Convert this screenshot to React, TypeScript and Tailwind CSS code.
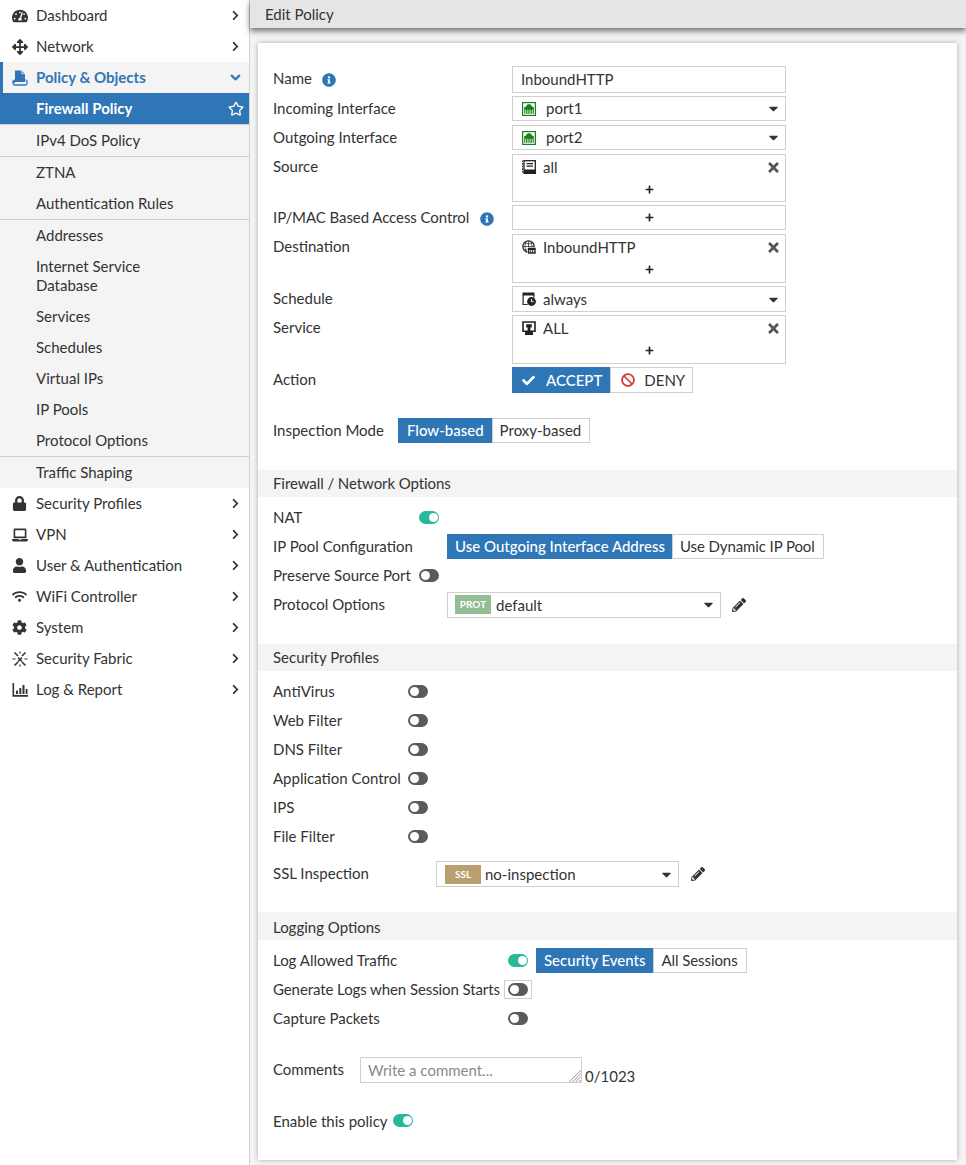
import { ChevronDown, Star } from 'lucide-react';
import { ReactNode } from 'react';
import {
  FaTachometerAlt,
  FaArrowsAlt,
  FaChevronRight,
  FaLock,
  FaLaptop,
  FaUser,
  FaWifi,
  FaCog,
  FaInfoCircle,
  FaTimes,
  FaPlus,
  FaCaretDown,
  FaCheck,
  FaBan,
  FaPencilAlt,
} from 'react-icons/fa';

// Custom FortiOS glyphs, not in the icon packs
function PolicyIcon() {
  return (
    <svg viewBox="0 0 16 16" className="w-4 h-4" fill="currentColor">
      <path d="M3 0.5h6.5L13 4v8H3z" />
      <path d="M9.8 0.5v3.2H13" fill="none" stroke="#f4f4f4" strokeWidth="0.8" />
      <path d="M1 10.5v3a1.5 1.5 0 0 0 1.5 1.5h11a1.5 1.5 0 0 0 1.5-1.5v-2a1.5 1.5 0 0 0-1.5-1.5" fill="none" stroke="currentColor" strokeWidth="1.3" />
      <path d="M1 13.5V10.8L3 9v4z" />
    </svg>
  );
}

function FabricIcon() {
  return (
    <svg viewBox="0 0 16 16" className="w-4 h-4" fill="none" stroke="currentColor" strokeWidth="1.6">
      <path d="M2.5 1.5l3.5 3.5M13.5 1.5L10 5M2.5 14.5L6 11M13.5 14.5L10 11M6 6.5l4 4M10 6.5l-4 4" />
      <path d="M0.5 8h3M12.5 8h3M8 0.5v2M8 13.5v2" strokeWidth="1.2" />
    </svg>
  );
}

function LogIcon() {
  return (
    <svg viewBox="0 0 16 16" className="w-4 h-4" fill="currentColor">
      <path d="M0.5 1h1.6v12H16v1.8H0.5z" />
      <path d="M4 8.5h2v3.5H4zM7.3 6h2v6h-2zM10.5 3h2v9h-2zM13.7 7h1.8v5h-1.8z" />
    </svg>
  );
}

function PortIcon() {
  return (
    <svg viewBox="0 0 14 14" className="w-[14px] h-[14px]">
      <rect x="0.6" y="0.6" width="12.8" height="12.8" fill="#fff" stroke="#1a7f1a" strokeWidth="1.2" />
      <path d="M2.2 11.8V5h1.6V3.4h1.5V2.2h3.4v1.2h1.5V5h1.6v6.8z" fill="#1a7f1a" />
      <path d="M3.5 7.8v4M5.3 7.8v4M7 7.8v4M8.7 7.8v4M10.5 7.8v4" stroke="#fff" strokeWidth="0.7" />
    </svg>
  );
}

function AddressIcon() {
  return (
    <svg viewBox="0 0 14 14" className="w-[14px] h-[14px]">
      <rect x="2" y="0.7" width="11.3" height="12.6" fill="#fff" stroke="#222" strokeWidth="1.3" />
      <path d="M2 9.5h12v4.5H2z" fill="#222" />
      <path d="M0.6 0.5v13" stroke="#222" strokeWidth="1.1" strokeDasharray="1.6 1" />
      <path d="M4.5 3h6.5v1.2H4.5zM4.5 5.6h6.5v1.2H4.5z" fill="#222" />
    </svg>
  );
}

function VipIcon() {
  return (
    <svg viewBox="0 0 14 14" className="w-[14px] h-[14px]">
      <circle cx="6.5" cy="6.5" r="5.7" fill="none" stroke="#222" strokeWidth="1.2" />
      <path d="M1 6.5h11M6.5 1v11M3 2.8c2.2 1.3 4.8 1.3 7 0M3 10.2c2.2-1.3 4.8-1.3 7 0M4.5 1.5c-2 3-2 7 0 10M8.5 1.5c2 3 2 7 0 10" fill="none" stroke="#222" strokeWidth="0.7" />
      <rect x="5.6" y="7.4" width="8.4" height="6.6" fill="#222" stroke="#fff" strokeWidth="0.6" />
      <path d="M7.2 10h1.1v2.2H7.2zM9.2 10h1.1v2.2H9.2zM11.2 10h1.1v2.2h-1.1z" fill="#fff" />
    </svg>
  );
}

function ScheduleIcon() {
  return (
    <svg viewBox="0 0 14 14" className="w-[14px] h-[14px]">
      <path d="M0.5 0.5h12v3h-12z" fill="#222" />
      <path d="M1.1 3v9.5h4.5M11.9 3v2.6" fill="none" stroke="#222" strokeWidth="1.2" />
      <circle cx="9.5" cy="9.5" r="4.4" fill="#222" />
      <path d="M9.5 7v2.7h2.1" fill="none" stroke="#fff" strokeWidth="1" />
    </svg>
  );
}

function ServiceIcon() {
  return (
    <svg viewBox="0 0 14 14" className="w-[14px] h-[14px]">
      <path d="M1 1h12v9.2H1z" fill="none" stroke="#222" strokeWidth="1.6" />
      <path d="M4.2 3.2h5.6v3.4H8.4v3.6H5.6V6.6H4.2z" fill="#222" />
      <path d="M3 11h8v3H3z" fill="#222" />
    </svg>
  );
}

type NavItem = { label: string; icon: ReactNode };

const topNav: NavItem[] = [
  { label: 'Dashboard', icon: <FaTachometerAlt className="w-4 h-4" /> },
  { label: 'Network', icon: <FaArrowsAlt className="w-4 h-4" /> },
];

const bottomNav: NavItem[] = [
  { label: 'Security Profiles', icon: <FaLock className="w-[15px] h-[15px]" /> },
  { label: 'VPN', icon: <FaLaptop className="w-4 h-4" /> },
  { label: 'User & Authentication', icon: <FaUser className="w-[15px] h-[15px]" /> },
  { label: 'WiFi Controller', icon: <FaWifi className="w-[15px] h-[15px]" /> },
  { label: 'System', icon: <FaCog className="w-[15px] h-[15px]" /> },
  { label: 'Security Fabric', icon: <FabricIcon /> },
  { label: 'Log & Report', icon: <LogIcon /> },
];

function NavRow({ item }: { item: NavItem }) {
  return (
    <div className="flex items-center h-[31px] pl-3 pr-2 text-[#333]">
      <span className="w-6 flex items-center">{item.icon}</span>
      <span className="flex-1">{item.label}</span>
      <FaChevronRight className="w-[11px] h-[11px]" />
    </div>
  );
}

function SubRow({ label, border }: { label: string; border?: boolean }) {
  return (
    <div className={`flex items-center h-[31px] pl-9 text-[#333] box-content ${border ? 'border-b border-[#cfcfcf]' : ''}`}>
      {label}
    </div>
  );
}

function Sidebar() {
  return (
    <aside className="w-[250px] shrink-0 bg-white border-r border-[#cfcfcf]">
      {topNav.map((item) => (
        <NavRow key={item.label} item={item} />
      ))}
      <div className="flex items-center h-[31px] pl-[9px] pr-[6px] bg-[#f4f4f4] border-l-[3px] border-[#2f76b7] text-[#2f76b7] font-bold">
        <span className="w-6 flex items-center">
          <PolicyIcon />
        </span>
        <span className="flex-1">Policy &amp; Objects</span>
        <ChevronDown className="w-[15px] h-[15px]" strokeWidth={3.5} />
      </div>
      <div className="flex items-center h-[31px] pl-9 pr-[5px] bg-[#2f76b7] text-white font-bold box-content border-b border-[#cfcfcf]">
        <span className="flex-1">Firewall Policy</span>
        <Star className="w-4 h-4" strokeWidth={2} />
      </div>
      <div className="bg-[#f4f4f4]">
        <SubRow label="IPv4 DoS Policy" border />
        <SubRow label="ZTNA" />
        <SubRow label="Authentication Rules" border />
        <SubRow label="Addresses" />
        <div className="h-[50px] pl-9 flex items-center text-[#333] leading-[19px]">
          <span>
            Internet Service
            <br />
            Database
          </span>
        </div>
        <SubRow label="Services" />
        <SubRow label="Schedules" />
        <SubRow label="Virtual IPs" />
        <SubRow label="IP Pools" />
        <SubRow label="Protocol Options" border />
        <SubRow label="Traffic Shaping" />
      </div>
      {bottomNav.map((item) => (
        <NavRow key={item.label} item={item} />
      ))}
    </aside>
  );
}

function Label({ children, className = '' }: { children: ReactNode; className?: string }) {
  return <div className={`w-[239px] shrink-0 text-[#333] leading-[24px] ${className}`}>{children}</div>;
}

function Info() {
  return <FaInfoCircle className="inline-block w-[14px] h-[14px] text-[#2f76b7]" />;
}

function Caret() {
  return <FaCaretDown className="w-[9px] h-[15px] text-[#333]" />;
}

function SelectBox({ icon, text, h = 'h-[25px]', gap = 'ml-[10px]' }: { icon: ReactNode; text: string; h?: string; gap?: string }) {
  return (
    <div className={`w-[274px] ${h} border border-[#cfcfcf] flex items-center pl-[9px] pr-[7px] text-[#333]`}>
      {icon}
      <span className={`flex-1 ${gap}`}>{text}</span>
      <Caret />
    </div>
  );
}

function MultiBox({ icon, text, h = 'h-[49px]' }: { icon: ReactNode; text: string; h?: string }) {
  return (
    <div className={`relative w-[274px] ${h} border border-[#cfcfcf] text-[#333]`}>
      <div className="flex items-center h-[24px] pl-[9px]">
        {icon}
        <span className="ml-[7px]">{text}</span>
      </div>
      <FaTimes className="absolute right-[6px] top-[5px] w-[11px] h-[15px] text-[#555]" />
      <div className="flex justify-center pt-[6px]">
        <FaPlus className="w-[9px] h-[9px] text-[#222]" />
      </div>
    </div>
  );
}

function Toggle({ on }: { on?: boolean }) {
  return (
    <span
      className={`relative inline-block w-5 h-[13px] rounded-full shrink-0 ${on ? 'bg-[#26b99a]' : 'bg-[#5a5a5a]'}`}
    >
      <span
        className={`absolute top-[2px] w-[9px] h-[9px] rounded-full bg-white ${on ? 'right-[1.5px]' : 'left-[1.5px]'}`}
      />
    </span>
  );
}

function SectionHead({ title, className = '' }: { title: string; className?: string }) {
  return <div className={`h-[27px] flex items-center px-[15px] bg-[#f4f4f4] text-[#333] ${className}`}>{title}</div>;
}

function Segmented({ options }: { options: ReactNode[] }) {
  return (
    <div className="flex h-[25px]">
      {options.map((opt, i) => (
        <div
          key={i}
          className={
            i === 0
              ? 'flex items-center px-[8px] bg-[#2f76b7] text-white font-medium'
              : 'flex items-center pl-[7px] pr-[8px] border border-[#cfcfcf] text-[#333]'
          }
        >
          {opt}
        </div>
      ))}
    </div>
  );
}

function ProfileRow({ label }: { label: string }) {
  return (
    <div className="flex items-center h-[29px]">
      <div className="w-[135px] text-[#333]">{label}</div>
      <Toggle />
    </div>
  );
}

export default function App() {
  return (
    <div className="flex w-[966px] h-[1165px] overflow-hidden font-['Lato',sans-serif] text-[15px] bg-[#f4f4f4]">
      <Sidebar />
      <main className="flex-1 min-w-0">
        <div className="h-[28px] pl-[15px] flex items-center bg-[#e5e5e5] text-[#333] shadow-[0_3px_6px_rgba(0,0,0,0.55)]">
          Edit Policy
        </div>
        <div className="ml-2 mr-[9px] mt-[15px] h-[1117px] bg-white shadow-[0_0_5px_rgba(0,0,0,0.3)]">
          <div className="pl-[15px] pt-[23px] flex flex-col">
            <div className="flex items-start">
              <Label>
                Name <span className="ml-[6px]"><Info /></span>
              </Label>
              <div className="w-[274px] h-[27px] border border-[#cfcfcf] flex items-center pl-2 text-[#333]">InboundHTTP</div>
            </div>
            <div className="flex items-start mt-[3px]">
              <Label>Incoming Interface</Label>
              <SelectBox icon={<PortIcon />} text="port1" />
            </div>
            <div className="flex items-start mt-1">
              <Label>Outgoing Interface</Label>
              <SelectBox icon={<PortIcon />} text="port2" />
            </div>
            <div className="flex items-start mt-1">
              <Label>Source</Label>
              <MultiBox icon={<AddressIcon />} text="all" h="h-[48px]" />
            </div>
            <div className="flex items-start mt-[3px]">
              <Label className="tracking-[-0.07px]">
                IP/MAC Based Access Control <span className="ml-[7px]"><Info /></span>
              </Label>
              <div className="w-[274px] h-[25px] border border-[#cfcfcf] flex items-center justify-center">
                <FaPlus className="w-[9px] h-[9px] text-[#222]" />
              </div>
            </div>
            <div className="flex items-start mt-1">
              <Label>Destination</Label>
              <MultiBox icon={<VipIcon />} text="InboundHTTP" />
            </div>
            <div className="flex items-start mt-[3px]">
              <Label>Schedule</Label>
              <SelectBox icon={<ScheduleIcon />} text="always" h="h-[26px]" gap="ml-[7px]" />
            </div>
            <div className="flex items-start mt-[3px]">
              <Label>Service</Label>
              <MultiBox icon={<ServiceIcon />} text="ALL" />
            </div>
            <div className="flex items-start mt-[3px]">
              <Label>Action</Label>
              <div className="flex h-[26px]">
                <div className="flex items-center pl-[10px] pr-2 bg-[#2f76b7] text-white font-medium">
                  <FaCheck className="w-[13px] h-[13px] mr-[11px]" />
                  ACCEPT
                </div>
                <div className="flex items-center pl-[10px] pr-[7px] border border-[#cfcfcf] text-[#333]">
                  <FaBan className="w-[14px] h-[14px] mr-[9px] text-[#d13b3b]" />
                  DENY
                </div>
              </div>
            </div>
            <div className="flex items-center mt-[25px]">
              <div className="w-[125px] text-[#333]">Inspection Mode</div>
              <Segmented options={[<span className="ml-px">Flow-based</span>, 'Proxy-based']} />
            </div>
          </div>

          <div className="mt-[27px]">
            <SectionHead title="Firewall / Network Options" className="tracking-[-0.08px]" />
            <div className="pl-[15px] pt-[6px] flex flex-col">
              <div className="flex items-center h-[29px]">
                <div className="w-[146px] text-[#333]">NAT</div>
                <Toggle on />
              </div>
              <div className="flex items-center h-[29px]">
                <div className="w-[174px] text-[#333]">IP Pool Configuration</div>
                <Segmented
                  options={[
                    <span className="-mr-px">Use Outgoing Interface Address</span>,
                    <span className="tracking-[-0.1px]">Use Dynamic IP Pool</span>,
                  ]}
                />
              </div>
              <div className="flex items-center h-[29px]">
                <div className="w-[146px] text-[#333]">Preserve Source Port</div>
                <Toggle />
              </div>
              <div className="flex items-center h-[29px]">
                <div className="w-[174px] text-[#333]">Protocol Options</div>
                <div className="w-[274px] h-[26px] border border-[#cfcfcf] flex items-center pl-[7px] pr-[7px] text-[#333]">
                  <span className="w-9 h-[19px] bg-[#93bd93] text-white text-[10px] font-bold flex items-center justify-center">PROT</span>
                  <span className="flex-1 ml-[5px] mt-[2px]">default</span>
                  <Caret />
                </div>
                <FaPencilAlt className="w-[14px] h-[14px] ml-[11px] text-[#333]" />
              </div>
            </div>
          </div>

          <div className="mt-[25px]">
            <SectionHead title="Security Profiles" />
            <div className="pl-[15px] pt-[6px] flex flex-col">
              {['AntiVirus', 'Web Filter', 'DNS Filter', 'Application Control', 'IPS', 'File Filter'].map((label) => (
                <ProfileRow key={label} label={label} />
              ))}
              <div className="flex items-center mt-[10px]">
                <div className="w-[163px] -mt-[2px] text-[#333]">SSL Inspection</div>
                <div className="w-[243px] h-[26px] border border-[#cfcfcf] flex items-center pl-2 pr-[7px] text-[#333]">
                  <span className="w-9 h-[19px] bg-[#bb9f70] text-white text-[10px] font-bold flex items-center justify-center">SSL</span>
                  <span className="flex-1 ml-[4px]">no-inspection</span>
                  <Caret />
                </div>
                <FaPencilAlt className="w-[14px] h-[14px] ml-[12px] text-[#333]" />
              </div>
            </div>
          </div>

          <div className="mt-[25px]">
            <SectionHead title="Logging Options" className="pt-[2px] h-[28px]" />
            <div className="pl-[15px] pt-[8px] flex flex-col">
              <div className="flex items-center h-[25px]">
                <div className="w-[235px] text-[#333]">Log Allowed Traffic</div>
                <Toggle on />
                <div className="ml-2">
                  <Segmented options={['Security Events', <span className="tracking-[-0.08px]">All Sessions</span>]} />
                </div>
              </div>
              <div className="flex items-center h-[19px] mt-[7px]">
                <div className="w-[231px] text-[#333] whitespace-nowrap tracking-[-0.09px]">Generate Logs when Session Starts</div>
                <div className="w-[28px] h-[19px] border border-[#cfcfcf] flex items-center justify-center">
                  <Toggle />
                </div>
              </div>
              <div className="flex items-center h-[29px] mt-[5px]">
                <div className="w-[235px] text-[#333]">Capture Packets</div>
                <Toggle />
              </div>
              <div className="flex items-start mt-[24px]">
                <div className="w-[87px] text-[#333] leading-[25px]">Comments</div>
                <div className="relative w-[222px] h-[26px] border border-[#cfcfcf] pl-[7px] flex items-center text-[#8a8a8a]">
                  Write a comment...
                  <svg viewBox="0 0 12 12" className="absolute right-0 bottom-0 w-[13px] h-[13px]" stroke="#777" strokeWidth="0.7">
                    <path d="M1 12L12 1M4 12l8-8M7 12l5-5M10 12l2-2" />
                  </svg>
                </div>
                <div className="ml-[3px] pt-[8px] text-[#333]">0/1023</div>
              </div>
              <div className="flex items-center mt-[22px]">
                <div className="w-[120px] text-[#333]">Enable this policy</div>
                <Toggle on />
              </div>
            </div>
          </div>
        </div>
      </main>
    </div>
  );
}
